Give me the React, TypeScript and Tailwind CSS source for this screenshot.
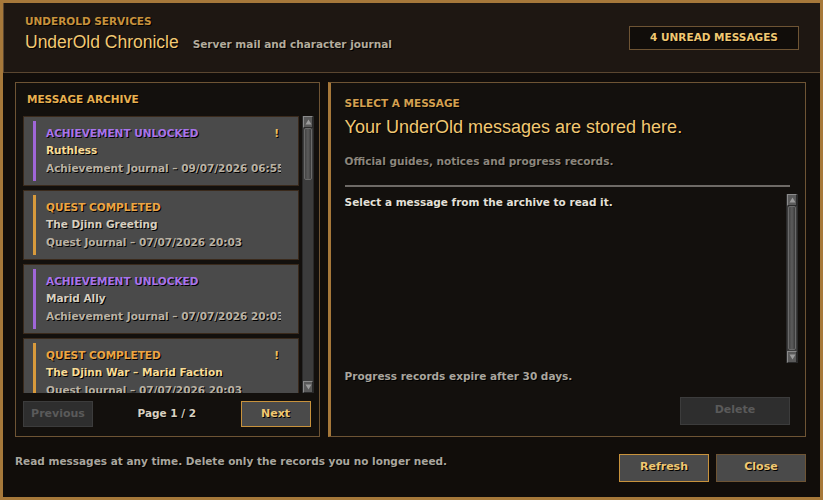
const px = "font-['DejaVu_Sans',sans-serif] font-bold [text-shadow:1px_1px_0_#000]";

type Msg = {
  kind: "achievement" | "quest";
  title: string;
  meta: string;
  unread: boolean;
};

const messages: Msg[] = [
  { kind: "achievement", title: "Ruthless", meta: "Achievement Journal \u2013 09/07/2026 06:55", unread: true },
  { kind: "quest", title: "The Djinn Greeting", meta: "Quest Journal \u2013 07/07/2026 20:03", unread: false },
  { kind: "achievement", title: "Marid Ally", meta: "Achievement Journal \u2013 07/07/2026 20:03", unread: false },
  { kind: "quest", title: "The Djinn War \u2013 Marid Faction", meta: "Quest Journal \u2013 07/07/2026 20:03", unread: true },
];

function Arrow({ up }: { up?: boolean }) {
  return (
    <div className="h-[12px] w-full bg-[#5a5a5a] border border-t-[#8a8a8a] border-l-[#8a8a8a] border-r-[#2a2a2a] border-b-[#2a2a2a] flex items-center justify-center">
      <svg width="7" height="6" viewBox="0 0 7 6">
        {up ? <path d="M3.5 0.5 L6.5 5.5 L0.5 5.5 Z" fill="#9a9a9a" /> : <path d="M0.5 0.5 L6.5 0.5 L3.5 5.5 Z" fill="#9a9a9a" />}
      </svg>
    </div>
  );
}

function ScrollBar({ thumb }: { thumb: string }) {
  return (
    <div className="w-[12px] h-full flex flex-col bg-[#3c3c3c] border-x border-[#2a2a2a]">
      <Arrow up />
      <div className="flex-1 flex flex-col">
        <div className={`${thumb} mx-[1px] rounded-[2px] bg-gradient-to-r from-[#444] via-[#5c5c5c] to-[#3a3a3a] border border-[#6a6a6a]`} />
      </div>
      <Arrow />
    </div>
  );
}

function Button({ label, active, disabled, className }: { label: string; active?: boolean; disabled?: boolean; className: string }) {
  return (
    <button
      className={`${className} ${px} text-[11px] flex items-center justify-center border ${
        disabled
          ? "bg-[#2e2e2e] border-[#3c3c3c] text-[#5a5a5a] [text-shadow:none]"
          : active
          ? "bg-[#4a4a4a] border-[#c8923c] text-[#f0c872]"
          : "bg-[#4a4a4a] border-[#6e5434] text-[#f0c872]"
      }`}
    >
      {label}
    </button>
  );
}

function MessageCard({ m }: { m: Msg }) {
  const ach = m.kind === "achievement";
  return (
    <div className="h-[70px] shrink-0 bg-[#4a4a4a] border border-[#3a2a1c] flex items-stretch pl-[9px] pr-[17px] py-[4px] gap-[10px]">
      <div className={`w-[3px] ${ach ? "bg-[#a066d8]" : "bg-[#d89a3c]"}`} />
      <div className={`flex-1 min-w-0 flex flex-col ${px} text-[10.5px]`}>
        <div className="flex justify-between items-center h-[18px] mt-[4px]">
          <span className={ach ? "text-[#a873ec]" : "text-[#eda544]"}>{ach ? "ACHIEVEMENT UNLOCKED" : "QUEST COMPLETED"}</span>
          {m.unread && <span className="text-[#f0c060] pr-[2px]">!</span>}
        </div>
        <div className={`h-[15px] leading-[15px] ${m.unread ? "text-[#f8dc96]" : "text-[#d8d0c0]"}`}>{m.title}</div>
        <div className="h-[20px] leading-[20px] whitespace-nowrap overflow-hidden text-[#bab2a4]">{m.meta}</div>
      </div>
    </div>
  );
}

export default function App() {
  return (
    <div className="w-[823px] h-[500px] bg-[#110d0a] border-[3px] border-[#a6783a] flex flex-col">
      {/* header */}
      <header className="h-[70px] shrink-0 bg-[#1e1712] border-b border-l border-[#5a4630] flex items-center justify-between pl-[21px] pr-[21px]">
        <div className="flex flex-col pb-[8px]">
          <span className={`${px} text-[10.5px] text-[#c8923c] leading-[14px]`}>UNDEROLD SERVICES</span>
          <div className="flex items-baseline gap-[14px] mt-[3px]">
            <span className="font-['Liberation_Sans',sans-serif] text-[17.5px] text-[#f2c872] leading-[22px] [text-shadow:1px_1px_0_#000]">UnderOld Chronicle</span>
            <span className={`${px} text-[10.5px] text-[#b4ac9c]`}>Server mail and character journal</span>
          </div>
        </div>
        <div className={`w-[170px] h-[24px] border border-[#6e5434] bg-[#110d0a] flex items-center justify-center ${px} text-[10.5px] text-[#f0c872]`}>
          4 UNREAD MESSAGES
        </div>
      </header>

      {/* body */}
      <div className="flex gap-[8px] pl-[12px] pr-[14px] pt-[9px]">
        {/* archive */}
        <section className="w-[305px] h-[355px] border border-[#6e5434] bg-[#13100d] flex flex-col pl-[7px] pr-[4px]">
          <div className={`h-[33px] flex items-center pl-[4px] pt-[1px] ${px} text-[10.5px] text-[#e8b050]`}>MESSAGE ARCHIVE</div>
          <div className="h-[277px] flex gap-[3px]">
            <div className="w-[276px] h-full overflow-hidden flex flex-col gap-[4px]">
              {messages.map((m, i) => (
                <MessageCard key={i} m={m} />
              ))}
            </div>
            <ScrollBar thumb="h-[52px]" />
          </div>
          <div className="flex items-center justify-between mt-[8px] pr-[4px]">
            <Button label="Previous" disabled className="w-[70px] h-[26px]" />
            <span className={`${px} text-[10.5px] text-[#d8d0c0]`}>Page 1 / 2</span>
            <Button label="Next" active className="w-[70px] h-[26px]" />
          </div>
        </section>

        {/* reader */}
        <section className="w-[479px] h-[355px] border border-[#6e5434] border-l-[3px] border-l-[#a6783a] bg-[#13100d] flex flex-col pl-[14px] pr-[15px]">
          <div className={`pt-[13px] h-[33px] ${px} text-[10.5px] text-[#d4a050]`}>SELECT A MESSAGE</div>
          <div className="font-['Liberation_Sans',sans-serif] text-[18px] leading-[22px] text-[#f2c872] [text-shadow:1px_1px_0_#000]">Your UnderOld messages are stored here.</div>
          <div className={`mt-[16px] ${px} text-[10.5px] text-[#8c867c]`}>Official guides, notices and progress records.</div>
          <div className="mt-[15px] h-[2px] bg-[#6e6a66]" />
          <div className="mt-[7px] h-[169px] flex justify-between">
            <div className={`pt-[1px] ${px} text-[10.5px] text-[#e4e0d8]`}>Select a message from the archive to read it.</div>
            <div className="-mr-[8px]">
              <ScrollBar thumb="h-[144px]" />
            </div>
          </div>
          <div className={`mt-[6px] ${px} text-[10.5px] text-[#aaa69e]`}>Progress records expire after 30 days.</div>
          <div className="flex justify-end mt-[12px]">
            <Button label="Delete" disabled className="w-[110px] h-[28px]" />
          </div>
        </section>
      </div>

      {/* footer */}
      <footer className="flex-1 flex items-center justify-between pl-[12px] pr-[14px] pt-[1px]">
        <span className={`${px} text-[10.5px] text-[#aaa69e] -mt-[12px]`}>Read messages at any time. Delete only the records you no longer need.</span>
        <div className="flex gap-[7px]">
          <Button label="Refresh" active className="w-[90px] h-[28px]" />
          <Button label="Close" className="w-[90px] h-[28px]" />
        </div>
      </footer>
    </div>
  );
}
